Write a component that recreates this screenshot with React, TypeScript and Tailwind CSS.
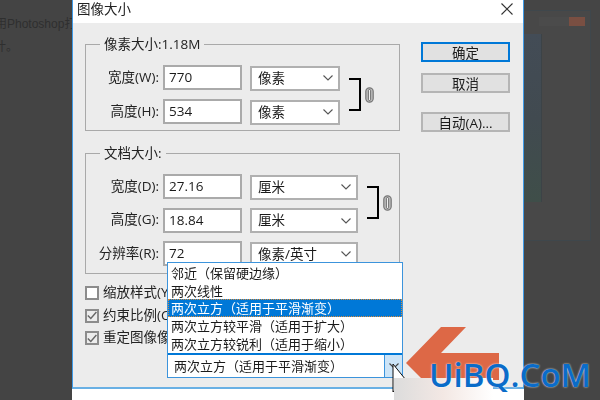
import React from 'react';

const ui = { fontFamily: '"Open Sans", "Noto Sans CJK SC", sans-serif' };

const Chevron: React.FC<{ color?: string }> = ({ color = '#555' }) => (
  <svg width="10" height="6" viewBox="0 0 10 6" fill="none" stroke={color} strokeWidth="1.1">
    <path d="M0.5 0.5 L5 5 L9.5 0.5" />
  </svg>
);

const Chain: React.FC = () => (
  <svg width="9" height="16" viewBox="0 0 9 16" fill="none">
    <rect x="0.8" y="0.8" width="7.4" height="14.4" rx="3.6" fill="#bdbdbd" stroke="#777" strokeWidth="1.2" />
    <rect x="3.4" y="2.5" width="2.2" height="11" rx="1.1" fill="#efefef" stroke="#555" strokeWidth="0.8" />
  </svg>
);

const Row: React.FC<{ label: string; value: string; unit: string; selectW: string }> = ({ label, value, unit, selectW }) => (
  <div className="flex items-center h-[25px]">
    <span className="w-[73px] text-right text-[13.5px] leading-none whitespace-nowrap text-[#222]">{label}</span>
    <div className="ml-[4px] w-[79px] h-[25px] bg-white border-2 border-[#aaaaaa] pl-[4px] text-[13.5px] leading-[20px] text-[#1a1a1a]">
      {value}
    </div>
    <div className={`ml-[8px] mt-px h-[25px] bg-white border-2 border-[#b0b0b0] pl-[6px] pr-[5px] flex items-center justify-between text-[13.5px] text-[#1a1a1a] ${selectW}`}>
      <span className="whitespace-nowrap">{unit}</span>
      <Chevron />
    </div>
  </div>
);

const Bracket: React.FC = () => (
  <div className="flex items-center">
    <div className="ml-[9px] w-[12px] h-[33px] border-y-2 border-r-2 border-black" />
    <div className="ml-[4px] flex"><Chain /></div>
  </div>
);

const CheckRow: React.FC<{ label: string; checked?: boolean }> = ({ label, checked }) => (
  <div className="flex items-center gap-[4px] h-[14px]">
    <div className={`w-[14px] h-[14px] border-2 border-[#8c8c8c] flex items-center justify-center ${checked ? 'bg-[#ececec]' : 'bg-white'}`}>
      {checked && (
        <svg width="10" height="9" viewBox="0 0 10 9" fill="none" stroke="#666" strokeWidth="1.4">
          <path d="M0.8 4.5 L3.8 7.5 L9.4 1" />
        </svg>
      )}
    </div>
    <span className="text-[13.5px] leading-none whitespace-nowrap text-[#222]">{label}</span>
  </div>
);

const Btn: React.FC<{ label: string; primary?: boolean; className?: string }> = ({ label, primary, className }) => (
  <div className={`w-[89px] h-[20px] bg-[#e1e1e1] border-2 pt-[3px] flex items-center justify-center text-[13.5px] leading-none text-[#1a1a1a] ${primary ? 'border-[#0078d7]' : 'border-[#b5b5b5]'} ${className ?? ''}`}>
    {label}
  </div>
);

const options = ['邻近（保留硬边缘）', '两次线性', '两次立方（适用于平滑渐变）', '两次立方较平滑（适用于扩大）', '两次立方较锐利（适用于缩小）'];

const App: React.FC = () => {
  return (
    <div className="relative w-[600px] h-[400px] overflow-hidden bg-white flex items-start" style={ui}>
      {/* page behind the dialog */}
      <aside className="w-[72px] h-[400px] shrink-0 bg-[#444444] overflow-hidden pt-[13px] text-[12px] leading-[23px] text-[#2f2f2f] whitespace-nowrap [font-family:'Liberation_Sans','Noto_Sans_CJK_SC',sans-serif]">
        <div className="-ml-[5px]">用Photoshop打开</div>
        <div className="-ml-[6px]">计。</div>
      </aside>

      {/* image size dialog */}
      <main className="relative w-[452px] h-[389px] shrink-0 border-x border-x-[#3f9ae6] border-b-2 border-b-[#69b0e4] bg-[#ececec] blur-[0.35px]">
        <header className="h-[23px] bg-white relative pl-[4px] pt-[1px] text-[13.5px] leading-[16px] text-[#222]">
          图像大小
          <svg className="absolute right-[10px] top-[3px]" width="12" height="12" viewBox="0 0 12 12" stroke="#333" strokeWidth="1.1">
            <path d="M0.5 0.5 L11.5 11.5 M11.5 0.5 L0.5 11.5" />
          </svg>
        </header>

        <div className="flex pl-[12px] pt-[13px]">
          <div className="w-[315px]">
            <fieldset className="border border-[#a9a9a9] pb-[6px]">
              <legend className="ml-[14px] px-[4px] h-[16px] text-[13.5px] leading-[16px] text-[#222]">像素大小:1.18M</legend>
              <div className="flex items-center mt-[13px]">
                <div className="flex flex-col gap-[9px]">
                  <Row label="宽度(W):" value="770" unit="像素" selectW="w-[90px]" />
                  <Row label="高度(H):" value="534" unit="像素" selectW="w-[90px]" />
                </div>
                <Bracket />
              </div>
            </fieldset>

            <fieldset className="mt-[14px] border border-[#a9a9a9] pb-[7px]">
              <legend className="ml-[14px] px-[4px] h-[16px] text-[13.5px] leading-[16px] text-[#222]">文档大小:</legend>
              <div className="flex items-start mt-[13px]">
                <div className="flex flex-col gap-[8.5px]">
                  <Row label="宽度(D):" value="27.16" unit="厘米" selectW="w-[108px]" />
                  <Row label="高度(G):" value="18.84" unit="厘米" selectW="w-[108px]" />
                  <Row label="分辨率(R):" value="72" unit="像素/英寸" selectW="w-[108px]" />
                </div>
                <div className="mt-[12px]"><Bracket /></div>
              </div>
            </fieldset>

            <div className="mt-[12px] flex flex-col gap-[8.5px]">
              <CheckRow label="缩放样式(Y)" />
              <CheckRow label="约束比例(C)" checked />
              <CheckRow label="重定图像像素(I):" checked />
            </div>
          </div>

          <div className="ml-[21px] mt-[6px] flex flex-col">
            <Btn label="确定" primary />
            <Btn label="取消" className="mt-[11px]" />
            <Btn label="自动(A)..." className="mt-[19px]" />
          </div>
        </div>

        {/* open resample menu */}
        <div className="absolute left-[94px] top-[262px] w-[236px] h-[116px] bg-white border-[1.5px] border-[#3c94dc] flex flex-col text-[13px] leading-[18px] text-[#1a1a1a] whitespace-nowrap">
          <div className="pt-[1px]">
            {options.map((o) =>
              o === options[2] ? (
                <div key={o} className="h-[18px] pl-[3px] bg-[#0078d7] text-white outline-1 outline-dotted -outline-offset-1 outline-[#d98b3a]">{o}</div>
              ) : (
                <div key={o} className="h-[17.5px] pl-[3px]">{o}</div>
              ),
            )}
          </div>
          <div className="mt-auto h-[24px] border-t-2 border-[#0078d7] flex items-stretch">
            <span className="flex-1 pl-[6px] leading-[22px]">两次立方（适用于平滑渐变）</span>
            <div className="w-[18px] bg-[#cce4f7] border-l border-[#3c94dc] flex items-center justify-center">
              <Chevron color="#444" />
            </div>
          </div>
        </div>
      </main>

      {/* window dimmed behind the dialog */}
      <aside className="flex-1 h-[400px] bg-[#454545] overflow-hidden">
        <div className="mt-[10px] w-[67px] h-[231px] bg-[#484848] border-r border-y border-[#3f474c] relative">
          <div className="absolute right-[5px] top-[6px] w-[16px] h-[9px] bg-[#7a4f42]" />
          <div className="absolute right-[21px] top-[6px] w-[30px] h-[9px] bg-[#4b4b4b]" />
          <div className="mt-[23px] w-[18px] h-[168px] border-r border-[#3c4347] bg-gradient-to-b from-[#434c56] via-[#414a50] to-[#3f4e49]" />
        </div>
      </aside>

      {/* tutorial arrow, cursor and watermark */}
      <svg className="absolute left-0 top-0 pointer-events-none" width="600" height="400" viewBox="0 0 600 400">
        <path d="M406 363 L441 327 L466 327 L441 353 L499 353 L499 380 L423 380 Z" fill="#dd6846" />
        <path d="M393 364 L393 392 L399 385 L410 385 Z" fill="#fff" stroke="#111" strokeWidth="1" />
      </svg>
      <div className="absolute left-[394px] top-[378px] w-[99px] h-[22px] bg-gradient-to-r from-[#dcdcdc] via-[#f3e8e4] to-white" />
      <div className="absolute left-[429px] top-[352px] text-[33px] leading-[46px] font-semibold text-[#0a6cc9] [font-family:'Open_Sans',sans-serif] whitespace-nowrap [text-shadow:0_0_2px_#ffffff]">
        UiBQ.CoM
      </div>
    </div>
  );
};

export default App;
